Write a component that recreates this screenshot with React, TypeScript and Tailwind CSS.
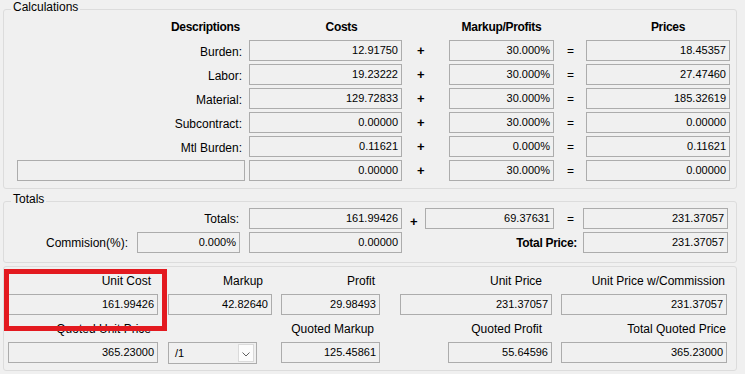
import React from 'react'

// readonly WinForms-ish text box
const box = 'h-[21px] shrink-0 border border-[#acacac] bg-[#f0f0f0] flex items-center justify-end pr-[3px] text-[11px] leading-none'
const label = 'shrink-0 flex items-center justify-end text-[12px] leading-[14px]'

const calcRows = [
  { name: 'Burden:',      cost: '12.91750',  markup: '30.000%', price: '18.45357' },
  { name: 'Labor:',       cost: '19.23222',  markup: '30.000%', price: '27.47460' },
  { name: 'Material:',    cost: '129.72833', markup: '30.000%', price: '185.32619' },
  { name: 'Subcontract:', cost: '0.00000',   markup: '30.000%', price: '0.00000' },
  { name: 'Mtl Burden:',  cost: '0.11621',   markup: '0.000%',  price: '0.11621' },
  { name: '',             cost: '0.00000',   markup: '30.000%', price: '0.00000' },
]

function GroupBox({ title, className, children }: { title?: string; className: string; children: React.ReactNode }) {
  return (
    <div className={`relative ml-[3px] w-[734px] shrink-0 border border-[#dcdcdc] rounded-[3px] ${className}`}>
      {title && (
        <span className="absolute left-[7px] top-[-10px] px-[2px] bg-[#f0f0f0] text-[12px] leading-[14px]">
          {title}
        </span>
      )}
      {children}
    </div>
  )
}

function Chevron() {
  return (
    <svg width="8" height="5" viewBox="0 0 8 5" fill="none">
      <path d="M0.5 0.5 L4 4 L7.5 0.5" stroke="#606060" strokeWidth="1" />
    </svg>
  )
}

export default function App() {
  return (
    <div className="relative w-[745px] h-[374px] overflow-hidden bg-[#f0f0f0] text-black font-['Liberation_Sans',Arial,sans-serif] flex flex-col">
      <div className="h-[9px] shrink-0" />

      {/* Calculations */}
      <GroupBox title="Calculations" className="h-[180px]">
        <div className="flex mt-[10px] h-[14px] text-[12px] leading-[14px] font-bold tracking-[-0.3px]">
          <div className="ml-[13px] w-[228px] text-right pr-[5px]">Descriptions</div>
          <div className="ml-[4px] w-[153px] pl-[32px] text-center">Costs</div>
          <div className="w-[47px]" />
          <div className="w-[105px] text-center">Markup/Profits</div>
          <div className="w-[32px]" />
          <div className="w-[144px] pl-[20px] text-center">Prices</div>
        </div>
        <div className="mt-[6px] flex flex-col gap-[3px]">
          {calcRows.map((r, i) => (
            <div key={i} className="flex h-[21px]">
              {r.name ? (
                <div className={`${label} ml-[13px] w-[228px] pr-[3px] h-[21px] pt-[2px]`}>{r.name}</div>
              ) : (
                <div className={`${box} ml-[13px] w-[228px]`} />
              )}
              <div className={`${box} ml-[4px] w-[153px]`}>{r.cost}</div>
              <div className="w-[47px] shrink-0 pl-[15px] flex items-center text-[13px] font-bold">+</div>
              <div className={`${box} w-[105px]`}>{r.markup}</div>
              <div className="w-[32px] shrink-0 pl-[13px] flex items-center text-[12px]">=</div>
              <div className={`${box} w-[144px]`}>{r.price}</div>
            </div>
          ))}
        </div>
      </GroupBox>

      {/* Totals */}
      <GroupBox title="Totals" className="mt-[12px] h-[62px]">
        <div className="mt-[6px] flex flex-col gap-[3px]">
          <div className="flex h-[21px]">
            <div className={`${label} w-[241px] pr-[6px] h-[21px] pt-[1px]`}>Totals:</div>
            <div className={`${box} ml-[4px] w-[153px]`}>161.99426</div>
            <div className="w-[23px] shrink-0 pl-[8px] pt-[7px] flex items-center text-[13px] font-bold">+</div>
            <div className={`${box} w-[129px]`}>69.37631</div>
            <div className="w-[29px] shrink-0 pl-[13px] flex items-center text-[12px]">=</div>
            <div className={`${box} w-[145px]`}>231.37057</div>
          </div>
          <div className="flex h-[21px]">
            <div className={`${label} w-[130px] pr-[6px] h-[21px] pt-[1px]`}>Commision(%):</div>
            <div className={`${box} ml-[3px] w-[103px]`}>0.000%</div>
            <div className={`${box} ml-[9px] w-[153px]`}>0.00000</div>
            <div className={`${label} w-[181px] pr-[6px] h-[21px] pt-[1px] font-bold tracking-[-0.3px]`}>Total Price:</div>
            <div className={`${box} w-[145px]`}>231.37057</div>
          </div>
        </div>
      </GroupBox>

      {/* Unit figures */}
      <GroupBox className="mt-[3px] h-[105px]">
        <div className="mt-[7px] flex h-[14px]">
          <div className={`${label} ml-[4px] w-[150px] pr-[7px]`}>Unit Cost</div>
          <div className={`${label} ml-[10px] w-[104px] pr-[9px]`}>Markup</div>
          <div className={`${label} ml-[9px] w-[99px] pr-[5px]`}>Profit</div>
          <div className={`${label} ml-[20px] w-[152px] pr-[10px]`}>Unit Price</div>
          <div className={`${label} ml-[9px] w-[166px] pr-[2px]`}>Unit Price w/Commission</div>
        </div>
        <div className="mt-[6px] flex">
          <div className={`${box} ml-[4px] w-[150px]`}>161.99426</div>
          <div className={`${box} ml-[10px] w-[104px]`}>42.82640</div>
          <div className={`${box} ml-[9px] w-[99px]`}>29.98493</div>
          <div className={`${box} ml-[20px] w-[152px]`}>231.37057</div>
          <div className={`${box} ml-[9px] w-[166px]`}>231.37057</div>
        </div>
        <div className="mt-[7px] flex h-[14px]">
          <div className={`${label} ml-[4px] w-[150px] pr-[7px]`}>Quoted Unit Price</div>
          <div className="ml-[10px] w-[104px] shrink-0" />
          <div className={`${label} ml-[9px] w-[99px] pr-[6px]`}>Quoted Markup</div>
          <div className={`${label} ml-[20px] w-[152px] pr-[10px]`}>Quoted Profit</div>
          <div className={`${label} ml-[9px] w-[166px] pr-[1px]`}>Total Quoted Price</div>
        </div>
        <div className="mt-[6px] flex">
          <div className={`${box} ml-[4px] w-[150px]`}>365.23000</div>
          <div className="ml-[10px] w-[104px] shrink-0">
            <div className="w-[89px] h-[22px] border border-[#acacac] bg-[#f0f0f0] flex items-center justify-between pl-[6px] pr-[2px] text-[11px]">
              <span>/1</span>
              <div className="w-[16px] h-[18px] border border-[#dadada] bg-[#fcfcfc] flex items-center justify-center pt-[2px]">
                <Chevron />
              </div>
            </div>
          </div>
          <div className={`${box} ml-[9px] w-[99px]`}>125.45861</div>
          <div className="ml-[20px] w-[152px] shrink-0 flex justify-end">
            <div className={`${box} w-[104px]`}>55.64596</div>
          </div>
          <div className={`${box} ml-[9px] w-[166px]`}>365.23000</div>
        </div>
      </GroupBox>

      {/* red highlight drawn over the Unit Cost field */}
      <div className="absolute left-[4px] top-[269px] w-[163px] h-[62px] border-[5px] border-[#e3191f] pointer-events-none" />
    </div>
  )
}
